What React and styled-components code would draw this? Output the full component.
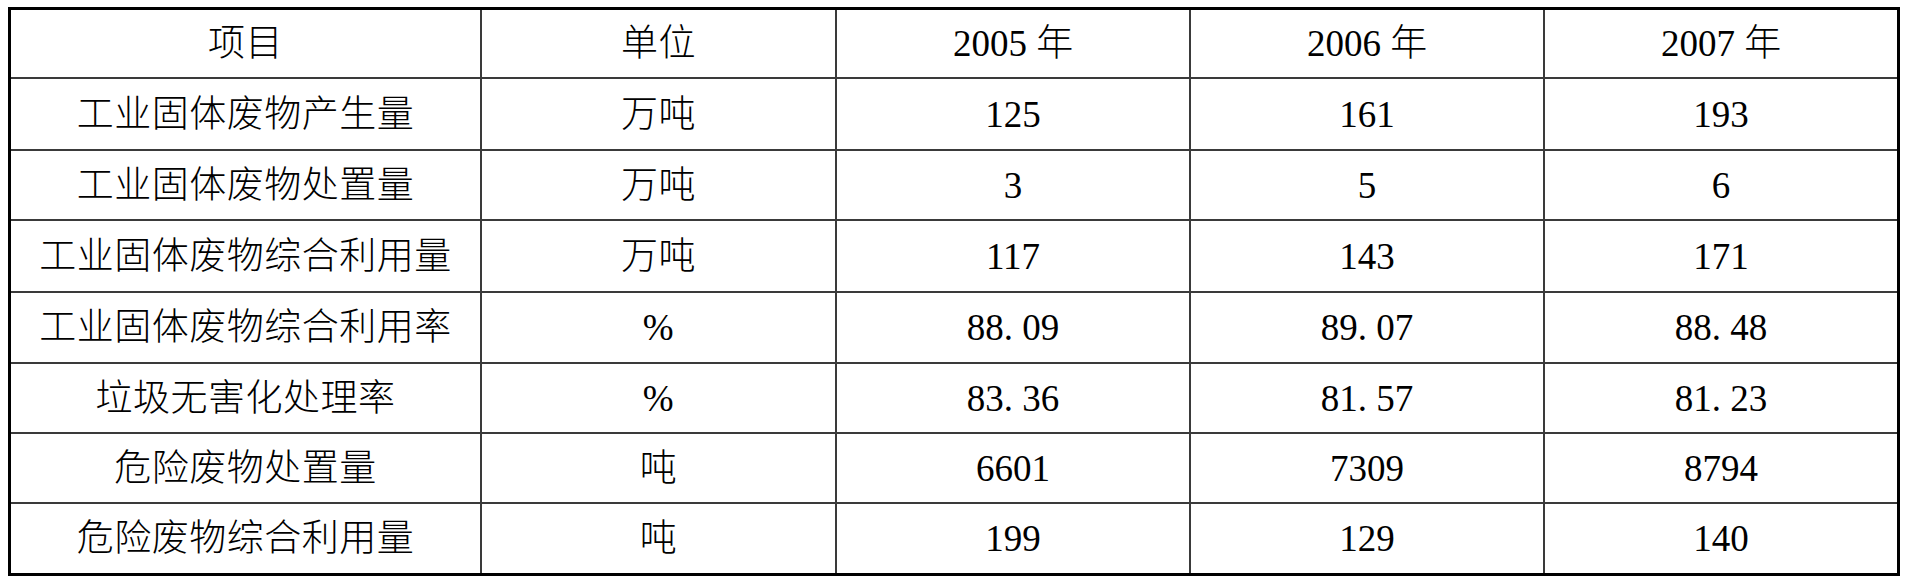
import React from "react";
import styled, { createGlobalStyle } from "styled-components";

const Global = createGlobalStyle`
  html, body { margin: 0; padding: 0; background: #fff; }
  body { font-family: "Liberation Serif", "Noto Sans CJK SC", serif; color: #000; }
`;

const Page = styled.div`
  padding: 7px 16px 8px 8px;
`;

const Grid = styled.div`
  display: grid;
  width: 1892px;
  height: 569px;
  box-sizing: border-box;
  border: 3px solid #000;
  background: #3a3a3a;
  gap: 2px;
  grid-template-columns: 469px 353px 352px 352px 352px;
  grid-template-rows: 67px 70px 68px 70px 69px 68px 68px 69px;
`;

const Cell = styled.div`
  background: #fff;
  display: flex;
  align-items: center;
  justify-content: center;
  font-size: 37px;
  font-weight: 300;
  line-height: 1;
  white-space: pre;
  letter-spacing: ${(p) => (p.$cjk ? "0.5px" : "0")};
`;

const header = ["项目", "单位", "2005 年", "2006 年", "2007 年"];
const rows = [
  ["工业固体废物产生量", "万吨", "125", "161", "193"],
  ["工业固体废物处置量", "万吨", "3", "5", "6"],
  ["工业固体废物综合利用量", "万吨", "117", "143", "171"],
  ["工业固体废物综合利用率", "%", "88. 09", "89. 07", "88. 48"],
  ["垃圾无害化处理率", "%", "83. 36", "81. 57", "81. 23"],
  ["危险废物处置量", "吨", "6601", "7309", "8794"],
  ["危险废物综合利用量", "吨", "199", "129", "140"],
];

export default function App() {
  return (
    <>
      <Global />
      <Page>
        <Grid>
          {header.map((h, i) => (
            <Cell key={"h" + i} $cjk={i < 2}>
              {h}
            </Cell>
          ))}
          {rows.map((r, ri) =>
            r.map((c, ci) => (
              <Cell key={ri + "-" + ci} $cjk={ci < 2}>
                {c}
              </Cell>
            ))
          )}
        </Grid>
      </Page>
    </>
  );
}
